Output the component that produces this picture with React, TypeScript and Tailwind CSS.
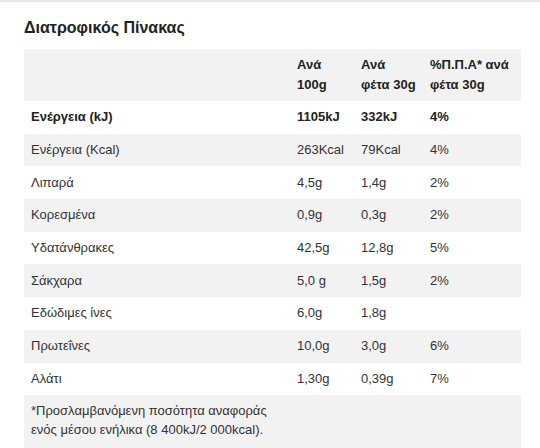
import React from 'react';

const rows = [
  { label: 'Ενέργεια (kJ)', per100: '1105kJ', perSlice: '332kJ', ri: '4%', bold: true },
  { label: 'Ενέργεια (Kcal)', per100: '263Kcal', perSlice: '79Kcal', ri: '4%' },
  { label: 'Λιπαρά', per100: '4,5g', perSlice: '1,4g', ri: '2%' },
  { label: 'Κορεσμένα', per100: '0,9g', perSlice: '0,3g', ri: '2%' },
  { label: 'Υδατάνθρακες', per100: '42,5g', perSlice: '12,8g', ri: '5%' },
  { label: 'Σάκχαρα', per100: '5,0 g', perSlice: '1,5g', ri: '2%' },
  { label: 'Εδώδιμες ίνες', per100: '6,0g', perSlice: '1,8g', ri: '' },
  { label: 'Πρωτεΐνες', per100: '10,0g', perSlice: '3,0g', ri: '6%' },
  { label: 'Αλάτι', per100: '1,30g', perSlice: '0,39g', ri: '7%' },
];

const App = () => {
  return (
    <div
      className="min-h-[448px] bg-white border-t-2 border-[#e8e8e8] text-[13px] text-[#333]"
      style={{ fontFamily: '"Liberation Sans", Arial, sans-serif' }}
    >
      <div className="pl-6 pr-[19px] pt-[16px]">
        <h2 className="text-[16px] font-bold text-[#222] leading-[20px] mb-[11px]">Διατροφικός Πίνακας</h2>

        <div className="w-full">
          <div className="grid grid-cols-[267px_64px_69px_1fr] bg-[#f2f2f2] font-bold text-[#222] leading-[20px] py-[6px]">
            <div className="px-[7px]"></div>
            <div className="px-[6px]">Ανά<br />100g</div>
            <div className="px-[6px]">Ανά<br />φέτα 30g</div>
            <div className="px-[6px]">%Π.Π.Α* ανά<br />φέτα 30g</div>
          </div>

          {rows.map((row, i) => (
            <div
              key={row.label}
              className={`grid grid-cols-[267px_64px_69px_1fr] items-center h-[32.7px] leading-[20px] ${
                i % 2 === 1 ? 'bg-[#f2f2f2]' : 'bg-white'
              } ${row.bold ? 'font-bold text-[#222]' : ''}`}
            >
              <div className="px-[7px]">{row.label}</div>
              <div className="px-[6px] whitespace-nowrap">{row.per100}</div>
              <div className="px-[6px] whitespace-nowrap">{row.perSlice}</div>
              <div className="px-[6px]">{row.ri}</div>
            </div>
          ))}

          <div className="bg-[#f2f2f2] px-[7px] pt-[6px] pb-[14px] leading-[19px]">
            *Προσλαμβανόμενη ποσότητα αναφοράς
            <br />
            ενός μέσου ενήλικα (8 400kJ/2 000kcal).
          </div>
        </div>
      </div>
    </div>
  );
};

export default App;
